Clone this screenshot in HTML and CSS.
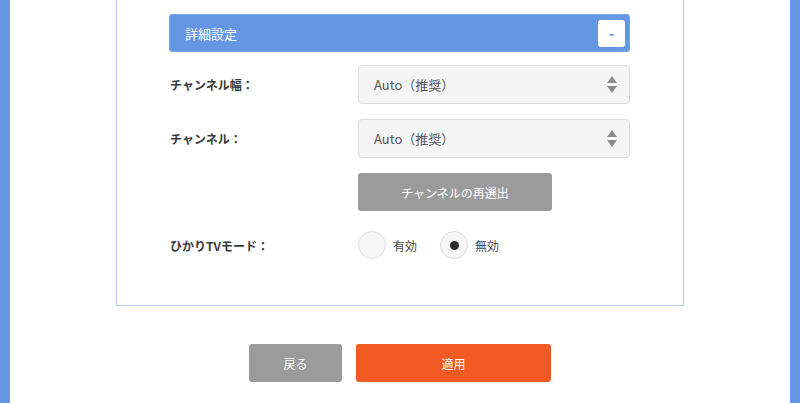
FILE: index.html
```html
<!DOCTYPE html>
<html lang="ja">
<head>
    <meta charset="UTF-8">
    <meta name="viewport" content="width=device-width, initial-scale=1.0">
    <title>詳細設定</title>
    <link rel="stylesheet" href="styles.css">
</head>
<body>
    <div class="page">
        <div class="panel">
            <div class="panel-head">
                <span>詳細設定</span>
                <button class="toggle">-</button>
            </div>

            <div class="row">
                <label class="label" for="width">チャンネル幅：</label>
                <div class="select">
                    <span>Auto（推奨）</span>
                    <span class="arrows"><i class="up"></i><i class="down"></i></span>
                </div>
            </div>

            <div class="row">
                <label class="label" for="channel">チャンネル：</label>
                <div class="select">
                    <span>Auto（推奨）</span>
                    <span class="arrows"><i class="up"></i><i class="down"></i></span>
                </div>
            </div>

            <div class="row">
                <span class="label"></span>
                <button class="btn gray wide">チャンネルの再選出</button>
            </div>

            <div class="row radio-row">
                <span class="label">ひかりTVモード：</span>
                <div class="radios">
                    <label class="radio"><span class="dot"></span>有効</label>
                    <label class="radio checked"><span class="dot"></span>無効</label>
                </div>
            </div>
        </div>

        <div class="actions">
            <button class="btn gray back">戻る</button>
            <button class="btn orange apply">適用</button>
        </div>
    </div>
</body>
</html>
```

FILE: styles.css
```css
html, body {
    height: 100%;
}

body {
    margin: 0;
    background-color: #6596e3;
    font-family: 'Noto Sans CJK JP', 'Liberation Sans', sans-serif;
    color: #333;
    font-size: 12px;
}

.page {
    background-color: #fff;
    margin: 0 10px;
    height: 100%;
    display: flex;
    flex-direction: column;
    align-items: center;
}

.panel {
    width: 461px;
    padding: 14px 53px 46px 52px;
    border: 1px solid #b8cff5;
    border-top: none;
}

.panel-head {
    height: 38px;
    box-sizing: border-box;
    background-color: #6596e3;
    border: 1px solid #7aa5ea;
    border-radius: 3px;
    display: flex;
    align-items: center;
    justify-content: space-between;
    padding: 0 4px 0 15px;
    color: #fff;
    font-size: 13px;
}

.toggle {
    width: 27px;
    height: 27px;
    border: none;
    border-radius: 3px;
    background-color: #fff;
    color: #5b8de0;
    font-size: 14px;
    font-weight: bold;
    padding: 0;
    font-family: inherit;
}

.row {
    display: flex;
    align-items: center;
    margin-top: 15px;
}

.row:nth-of-type(2) {
    margin-top: 13px;
}

.label {
    width: 188px;
    font-weight: bold;
    font-size: 12px;
    color: #3a3a3a;
    padding-left: 1px;
}

.select {
    width: 272px;
    height: 39px;
    box-sizing: border-box;
    background-color: #f5f5f5;
    border: 1px solid #ddd;
    border-radius: 4px;
    display: flex;
    align-items: center;
    justify-content: space-between;
    padding: 0 12px 0 15px;
    color: #555;
    font-size: 13px;
}

.arrows {
    display: flex;
    flex-direction: column;
    gap: 3px;
}

.arrows i {
    width: 0;
    height: 0;
    border-left: 5px solid transparent;
    border-right: 5px solid transparent;
}

.arrows .up {
    border-bottom: 7px solid #8a8a8a;
}

.arrows .down {
    border-top: 7px solid #8a8a8a;
}

.btn {
    height: 38px;
    border: none;
    border-radius: 3px;
    color: #fff;
    font-family: inherit;
    font-size: 12px;
    padding: 0;
}

.gray {
    background-color: #9b9b9b;
}

.orange {
    background-color: #f15a22;
}

.wide {
    width: 194px;
}

.radio-row {
    margin-top: 20px;
}

.radios {
    display: flex;
    gap: 23px;
}

.radio {
    display: flex;
    align-items: center;
    gap: 7px;
    font-size: 12px;
    color: #444;
}

.dot {
    width: 28px;
    height: 28px;
    box-sizing: border-box;
    border-radius: 50%;
    border: 1px solid #ddd;
    background-color: #f7f7f7;
    display: flex;
    align-items: center;
    justify-content: center;
}

.radio.checked .dot::after {
    content: "";
    width: 9px;
    height: 9px;
    border-radius: 50%;
    background-color: #2b2b2b;
}

.actions {
    display: flex;
    gap: 14px;
    margin-top: 38px;
}

.back {
    width: 93px;
}

.apply {
    width: 195px;
}
```
